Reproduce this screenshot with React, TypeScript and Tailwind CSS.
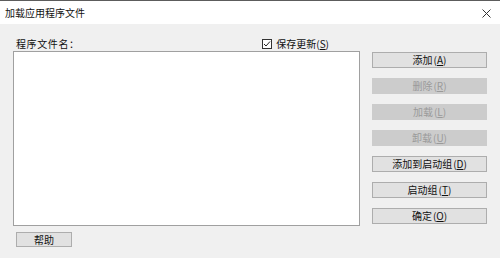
import React from "react";

const font = { fontFamily: '"Noto Sans CJK SC", "Noto Sans", sans-serif' };

function Btn({ label, k, disabled }: { label: string; k: string; disabled?: boolean }) {
  return (
    <div
      className={
        "h-[16px] w-full flex items-center justify-center text-[10px] leading-none " +
        (disabled
          ? "bg-[#cccccc] border border-[#cccccc] text-[#9a9a9a]"
          : "bg-[#e1e1e1] border border-[#adadad] text-[#111111]")
      }
    >
      <span>
        {label}
        <span className="ml-[1px]">(</span>
        <span className="underline">{k}</span>)
      </span>
    </div>
  );
}

export default function App() {
  return (
    <div className="w-[500px] h-[258px] bg-[#f0f0f0] flex flex-col overflow-hidden select-none" style={font}>
      <div className="h-[1px] bg-[#5c5c5c]" />
      <div className="h-[23px] bg-white flex items-center justify-between pl-[5px] pr-[9px]">
        <span className="text-[10px] leading-none text-[#111]">加载应用程序文件</span>
        <svg width="9" height="9" viewBox="0 0 9 9" className="mt-[1px]">
          <path d="M0.5 0.5 L8.5 8.5 M8.5 0.5 L0.5 8.5" stroke="#333" strokeWidth="1" />
        </svg>
      </div>
      <div className="flex pt-[12px] pl-[13px]">
        <div className="w-[347px] flex flex-col">
          <div className="h-[15px] flex items-center justify-between pl-[3px] pr-[31px]">
            <span className="text-[10px] leading-none text-[#111] tracking-[0.6px]">程序文件名：</span>
            <div className="flex items-center gap-[4px]">
              <div className="w-[10px] h-[10px] border border-[#333] bg-white flex items-center justify-center">
                <svg width="8" height="8" viewBox="0 0 8 8">
                  <path d="M1 4 L3 6 L7 1.5" stroke="#222" strokeWidth="1" fill="none" />
                </svg>
              </div>
              <span className="text-[10px] leading-none text-[#111]">
                保存更新(<span className="underline">S</span>)
              </span>
            </div>
          </div>
          <div className="h-[175px] bg-white border border-[#a0a0a0]" />
          <div className="mt-[6px] ml-[3px] w-[56px] h-[15px] bg-[#e1e1e1] border border-[#adadad] flex items-center justify-center text-[10px] leading-none text-[#111]">
            帮助
          </div>
        </div>
        <div className="ml-[12px] w-[115px] pt-[16px] flex flex-col gap-[10px]">
          <Btn label="添加" k="A" />
          <Btn label="删除" k="R" disabled />
          <Btn label="加载" k="L" disabled />
          <Btn label="卸载" k="U" disabled />
          <Btn label="添加到启动组" k="D" />
          <Btn label="启动组" k="T" />
          <Btn label="确定" k="O" />
        </div>
      </div>
    </div>
  );
}
